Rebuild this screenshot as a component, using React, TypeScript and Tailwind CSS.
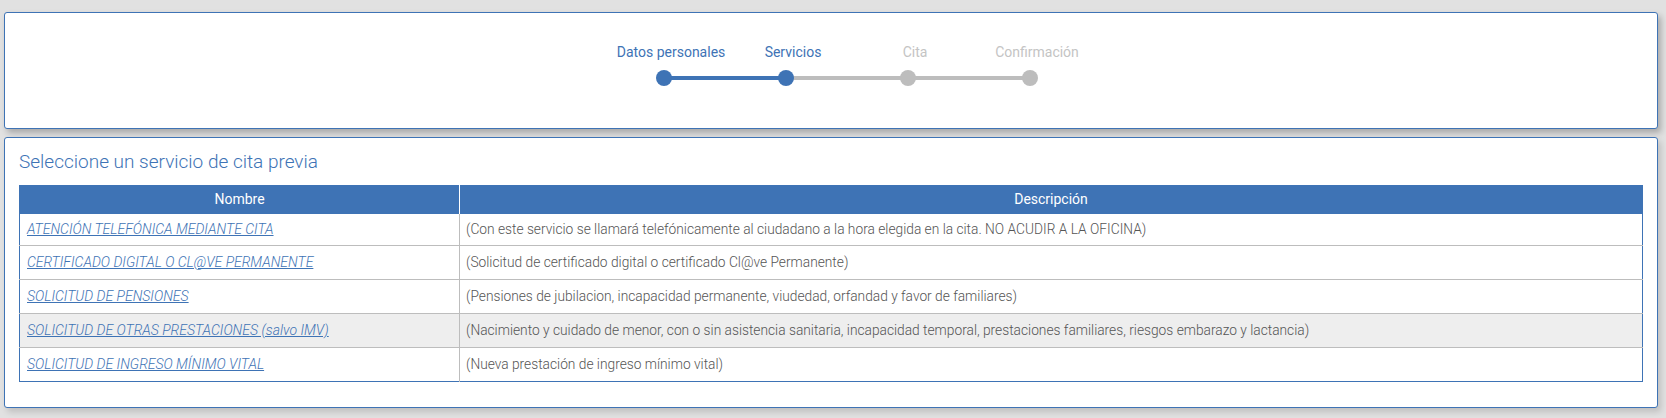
import React from "react"

const steps = [
  { label: "Datos personales", done: true },
  { label: "Servicios", done: true },
  { label: "Cita", done: false },
  { label: "Confirmación", done: false },
]

const services = [
  {
    name: "ATENCIÓN TELEFÓNICA MEDIANTE CITA",
    desc: "(Con este servicio se llamará telefónicamente al ciudadano a la hora elegida en la cita. NO ACUDIR A LA OFICINA)",
  },
  {
    name: "CERTIFICADO DIGITAL O CL@VE PERMANENTE",
    desc: "(Solicitud de certificado digital o certificado Cl@ve Permanente)",
  },
  {
    name: "SOLICITUD DE PENSIONES",
    desc: "(Pensiones de jubilacion, incapacidad permanente, viudedad, orfandad y favor de familiares)",
  },
  {
    name: "SOLICITUD DE OTRAS PRESTACIONES (salvo IMV)",
    desc: "(Nacimiento y cuidado de menor, con o sin asistencia sanitaria, incapacidad temporal, prestaciones familiares, riesgos embarazo y lactancia)",
    shaded: true,
  },
  {
    name: "SOLICITUD DE INGRESO MÍNIMO VITAL",
    desc: "(Nueva prestación de ingreso mínimo vital)",
  },
]

function Stepper() {
  return (
    <div className="flex justify-center pl-[32px] pt-[31px]">
      {steps.map((s, i) => (
        <div key={s.label} className="flex w-[122px] flex-col items-center">
          <span
            className={
              "pl-[14px] text-[14px] leading-[16px] whitespace-nowrap " +
              (s.done ? "text-[#3e73b5]" : "text-[#c4c4c4]")
            }
          >
            {s.label}
          </span>
          <div className="relative mt-[10px] flex h-[16px] w-full items-center justify-center">
            {i > 0 && (
              <div
                className={
                  "absolute left-0 right-1/2 h-[4px] " + (s.done ? "bg-[#3e73b5]" : "bg-[#bdbdbd]")
                }
              />
            )}
            {i < steps.length - 1 && (
              <div
                className={
                  "absolute left-1/2 right-0 h-[4px] " +
                  (steps[i + 1].done ? "bg-[#3e73b5]" : "bg-[#bdbdbd]")
                }
              />
            )}
            <div
              className={
                "relative h-[16px] w-[16px] rounded-full " + (s.done ? "bg-[#3e73b5]" : "bg-[#bdbdbd]")
              }
            />
          </div>
        </div>
      ))}
    </div>
  )
}

export default function App() {
  return (
    <div
      className="min-h-[418px] bg-[#e1e1e1] pt-[12px] pl-[4px]"
      style={{ fontFamily: "Roboto, 'Liberation Sans', sans-serif" }}
    >
      <div className="h-[117px] w-[1654px] rounded-[3px] border border-[#3e73b5] bg-white shadow-[3px_4px_6px_rgba(0,0,0,0.25)]">
        <Stepper />
      </div>

      <div className="mt-[8px] w-[1654px] rounded-[3px] border border-[#3e73b5] bg-white px-[14px] pt-[13px] pb-[25px] shadow-[3px_4px_6px_rgba(0,0,0,0.15)]">
        <h2 className="text-[19px] leading-[22px] font-light text-[#3e73b5]">
          Seleccione un servicio de cita previa
        </h2>
        <table className="mt-[12px] w-[1624px] border-collapse border border-[#3e73b5] text-[14px]">
          <thead>
            <tr className="h-[28px] bg-[#3e73b5] text-white">
              <th className="w-[440px] border-r border-white font-normal">Nombre</th>
              <th className="font-normal">Descripción</th>
            </tr>
          </thead>
          <tbody>
            {services.map((s, i) => (
              <tr
                key={s.name}
                className={
                  (i > 0 ? "h-[34px] border-t border-[#bdbdbd] " : "h-[32px] ") +
                  (s.shaded ? "bg-[#eeeeee]" : "bg-white")
                }
              >
                <td className="border-r border-[#bdbdbd] px-[7px]">
                  <a href="#" className="text-[14px] font-light text-[#3e73b5] italic underline">
                    {s.name}
                  </a>
                </td>
                <td className="px-[6px] text-[13.75px] font-light text-[#555555]">{s.desc}</td>
              </tr>
            ))}
          </tbody>
        </table>
      </div>
    </div>
  )
}
